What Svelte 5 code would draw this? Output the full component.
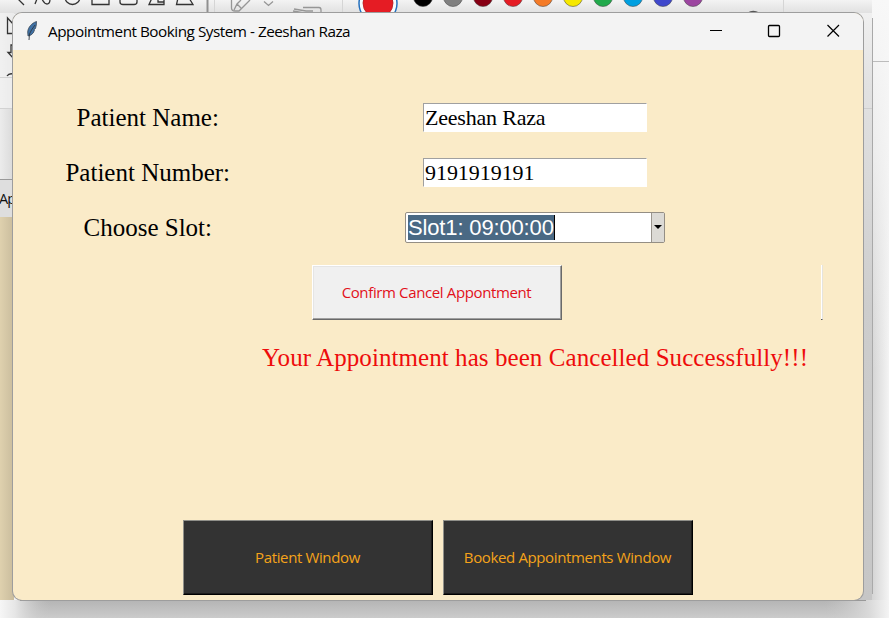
<script>
  const swatches = [
    { x: 423, color: '#000000' },
    { x: 453, color: '#808080' },
    { x: 483, color: '#870014' },
    { x: 513, color: '#e51c24' },
    { x: 543, color: '#f47b28' },
    { x: 573, color: '#f6e800' },
    { x: 603, color: '#22aa4c' },
    { x: 633, color: '#009fe0' },
    { x: 663, color: '#3f48cc' },
    { x: 693, color: '#9c45a0' }
  ];
  let name = $state('Zeeshan Raza');
  let number = $state('9191919191');
</script>

<div class="desktop">
  <svg class="backdrop" width="889" height="618" viewBox="0 0 889 618" aria-hidden="true">
    <defs>
      <linearGradient id="top" x1="0" y1="0" x2="0" y2="1">
        <stop offset="0" stop-color="#f3f3f3" /><stop offset="1" stop-color="#dfdfdf" />
      </linearGradient>
      <linearGradient id="left" x1="0" y1="0" x2="1" y2="0">
        <stop offset="0" stop-color="#ececec" /><stop offset="1" stop-color="#d9d9d9" />
      </linearGradient>
      <linearGradient id="sand" x1="0" y1="0" x2="1" y2="0">
        <stop offset="0" stop-color="#dfd1ae" /><stop offset="1" stop-color="#c9bc9d" />
      </linearGradient>
      <linearGradient id="gutter" x1="0" y1="0" x2="0" y2="1">
        <stop offset="0" stop-color="#f0f0f0" /><stop offset="0.12" stop-color="#e2e2e2" /><stop offset="0.5" stop-color="#cdcdcd" /><stop offset="1" stop-color="#c6c6c6" />
      </linearGradient>
      <linearGradient id="right" x1="0" y1="0" x2="1" y2="0">
        <stop offset="0" stop-color="#d4d4d4" /><stop offset="1" stop-color="#f4f4f4" />
      </linearGradient>
      <linearGradient id="rightFade" x1="0" y1="0" x2="0" y2="1">
        <stop offset="0" stop-color="#f8f8f8" /><stop offset="0.25" stop-color="#f4f4f4" stop-opacity="0.75" /><stop offset="0.6" stop-color="#f0f0f0" stop-opacity="0" />
      </linearGradient>
      <linearGradient id="bottom" x1="0" y1="0" x2="0" y2="1">
        <stop offset="0" stop-color="#b4b4b4" /><stop offset="1" stop-color="#cbcbcb" />
      </linearGradient>
      <linearGradient id="bottomL" x1="0" y1="0" x2="1" y2="0">
        <stop offset="0" stop-color="#f6f6f6" /><stop offset="0.3" stop-color="#e6e6e6" /><stop offset="1" stop-color="#c6c6c6" stop-opacity="0" />
      </linearGradient>
      <linearGradient id="bottomR" x1="0" y1="0" x2="1" y2="0">
        <stop offset="0" stop-color="#c8c8c8" stop-opacity="0" /><stop offset="0.7" stop-color="#dadada" /><stop offset="1" stop-color="#f4f4f4" />
      </linearGradient>
    </defs>
    <rect width="889" height="618" fill="#f3f3f3" />
    <rect width="872" height="14" fill="url(#top)" />
    <rect y="13" width="14" height="167" fill="url(#left)" />
    <rect y="13" width="14" height="95" fill="#f2f2f2" opacity="0.7" />
    <path d="M0 77.500H14M0 108.500H14" stroke="#d2d2d2" />
    <path d="M0 179.500H14" stroke="#999" />
    <rect y="180" width="14" height="37" fill="#dedede" />
    <rect y="217" width="14" height="383" fill="url(#sand)" />
    <rect x="855" y="13" width="18" height="590" fill="url(#gutter)" />
    <rect x="872" y="0" width="17" height="618" fill="url(#right)" />
    <rect x="872" y="0" width="17" height="618" fill="url(#rightFade)" />
    <path d="M872.500 18V594" stroke="#a9a9a9" />
    <path d="M873 61.500H889" stroke="#bcbcbc" />
    <path d="M864 108.500H872" stroke="#cecece" />
    <rect y="600" width="889" height="18" fill="url(#bottom)" />
    <rect y="600" width="50" height="18" fill="url(#bottomL)" />
    <rect x="825" y="600" width="64" height="18" fill="url(#bottomR)" />
    <path d="M20 600.500H866" stroke="#999" />
    <g fill="none" stroke="#333" stroke-width="1.300">
      <path d="M18 -1L24 5M35 4L37 -1M41 -3Q44 4 47 4Q50 4 50 -1" />
      <circle cx="72.500" cy="-3" r="7.500" />
      <path d="M92 -2V4.500H109V-2" />
      <path d="M120 -2V2Q120 4.500 123 4.500H134Q137 4.500 137 2V-2" />
      <path d="M152 -2L149 4.500H164V-2M158 -1V2H164M178 -2L176.500 4.500H193L189 -2" />
      <path d="M14 25L7.500 18V33.500H14M13 45H11V52.500H8L14 59M7 76Q9 73 13 74" />
    </g>
    <path d="M207.500 0V13" stroke="#909090" stroke-width="2" />
    <path d="M214.500 0V13M342.500 0V13M783.500 0V13" stroke="#d5d5d5" />
    <g fill="none" stroke="#969696" stroke-width="1.300">
      <path d="M231.500 0V8Q231.500 11 235 11H239L250 0M234 10L237 4L241 0M237 4L241 8M264 1.500L268.500 5.500L273 1.500" />
      <path d="M303 7.500H319Q321 7.500 321 10V13M294 9L306 11H313M293 11L304 13" />
      <path d="M748 13Q753 10 759 13" stroke="#555" />
    </g>
    <circle cx="378" cy="3.500" r="19" fill="#f7fafc" stroke="#2470bd" stroke-width="1.500" />
    <circle cx="378" cy="3" r="15" fill="#e51c24" stroke="#b71c20" stroke-width="0.800" />
    {#each swatches as s}
      <circle cx={s.x} cy="-3" r="9.500" fill={s.color} stroke="#444" stroke-opacity="0.600" stroke-width="0.900" />
    {/each}
  </svg>
  <span class="behind">Ap</span>

  <main class="window">
    <header>
      <svg class="feather" width="14" height="20" viewBox="0 0 14 20">
        <path d="M11.500 0.500C7 2 3 6 2.700 11L3 15L6 14Q9 12 9.500 9L9 8.500L10.500 7.500Q11.600 4 11.500 0.500Z" fill="#3f71a5" stroke="#3a4757" stroke-width="0.800" />
        <path d="M10 4Q6 9 4.500 13L4 19" fill="none" stroke="#2c3642" stroke-width="0.900" />
      </svg>
      <h1>Appointment Booking System - Zeeshan Raza</h1>
      <svg class="controls" width="140" height="37" viewBox="0 0 140 37" fill="none" stroke="#000">
        <path d="M9 17.500H21" />
        <rect x="67.500" y="12.500" width="11" height="11" rx="1" stroke-width="1.300" />
        <path d="M126.500 12L138 23.500M138 12L126.500 23.500" stroke-width="1.200" />
      </svg>
    </header>

    <section class="form">
      <div class="row">
        <label for="name">Patient Name:</label>
        <div class="field"><input id="name" bind:value={name} /></div>
      </div>
      <div class="row">
        <label for="number">Patient Number:</label>
        <div class="field"><input id="number" bind:value={number} /></div>
      </div>
      <div class="row">
        <label for="slot">Choose Slot:</label>
        <div class="field">
          <div class="combo" id="slot">
            <span class="selected">Slot1: 09:00:00</span>
            <span class="drop"><svg width="8" height="4" viewBox="0 0 8 4"><path d="M0 0H8L4 4Z" /></svg></span>
          </div>
        </div>
      </div>
    </section>

    <div class="actions">
      <button class="confirm"><span>Confirm Cancel Appontment</span></button>
      <i class="edge"></i>
    </div>
    <p><span>Your Appointment has been Cancelled Successfully!!!</span></p>

    <footer>
      <button class="dark"><span>Patient Window</span></button>
      <button class="dark"><span>Booked Appointments Window</span></button>
    </footer>
  </main>
</div>

<style>
  :global(body) { margin: 0; overflow: hidden; }
  .desktop {
    position: relative;
    box-sizing: border-box;
    width: 889px;
    height: 618px;
    padding: 13px;
    overflow: hidden;
    font-family: "Open Sans", "Noto Sans", sans-serif;
  }
  .backdrop { position: absolute; left: 0; top: 0; }
  .behind { position: absolute; left: -1px; top: 189px; font-size: 14.500px; line-height: 20px; color: #111; letter-spacing: -0.8px; }
  .window {
    position: relative;
    display: flex;
    flex-direction: column;
    width: 850px;
    height: 587px;
    border-radius: 9px;
    overflow: hidden;
    background: #faebc8;
    box-shadow: 0 0 0 1px #9d9d9d;
  }
  header { display: flex; height: 37px; background: #f3f3f3; flex: none; }
  .feather { margin: 8px 0 0 12px; }
  h1 { margin: 0 0 0 9px; font-size: 15.300px; font-weight: 400; line-height: 37px; white-space: nowrap; letter-spacing: -0.49px; color: #000; }
  .controls { margin-left: auto; margin-right: 22px; }
  .form { padding-top: 40.500px; }
  .row { display: flex; height: 55px; align-items: center; }
  label { width: 269.500px; text-align: center; font: 25px/30px "Liberation Serif", serif; white-space: nowrap; color: #000; }
  .field { width: 505px; display: flex; justify-content: center; padding-bottom: 2px; }
  input {
    box-sizing: border-box;
    width: 224px;
    height: 29px;
    padding: 2px 0 0 1px;
    border: 1px solid #fff;
    border-top-color: #a0a0a0;
    border-left-color: #a0a0a0;
    border-radius: 0;
    background: #fff;
    outline: 0;
    color: #000;
    font: 22px/25px "Liberation Serif", serif;
  }
  #name { letter-spacing: -0.2px; }
  #number { letter-spacing: -0.05px; }
  .combo { box-sizing: border-box; display: flex; width: 260px; height: 31px; border: 1px solid #948e84; border-radius: 2px; background: #fff; }
  .selected { margin: 2px auto 2px 2px; padding: 0 1px 0 0; width: 145px; font: 22px/25px "Liberation Sans", sans-serif; letter-spacing: -0.15px; color: #fff; background: #4a6984; border-right: 1px solid #000; white-space: nowrap; }
  .drop { display: flex; align-items: center; justify-content: center; width: 12px; border-left: 1px solid #9a958d; background: #dcdad5; }
  button { box-sizing: border-box; padding: 0 1px 2px 0; border-radius: 0; font: 15px/20px "Open Sans", "Noto Sans", sans-serif; white-space: nowrap; }
  button span { letter-spacing: -0.37px; }
  .actions { display: flex; height: 55px; margin: 9.500px 0 0 299px; }
  .confirm { width: 250px; height: 55px; background: #f0f0f0; color: #e2101a; border: 1px solid #fff; border-right-color: #696969; border-bottom-color: #696969; box-shadow: inset -1px -1px #a0a0a0, inset 1px 1px #e5e5e5; }
  .edge { box-sizing: border-box; width: 2px; height: 55px; margin-left: 259px; background: #fff; border-right: 1px solid #e6e3dc; border-bottom: 1px solid #555; }
  p { display: flex; justify-content: center; width: 546px; margin: 23px 0 0 249px; font: 25px/30px "Liberation Serif", serif; letter-spacing: 0.07px; color: #ee0c0c; white-space: nowrap; }
  footer { display: flex; gap: 10px; margin: auto 0 5px 170px; }
  .dark { width: 250px; height: 75px; background: #333; color: #f5a31a; border: 1px solid #000; border-top-color: #90908a; border-left-color: #90908a; box-shadow: inset -1px -1px #1c1c1c; }
</style>
